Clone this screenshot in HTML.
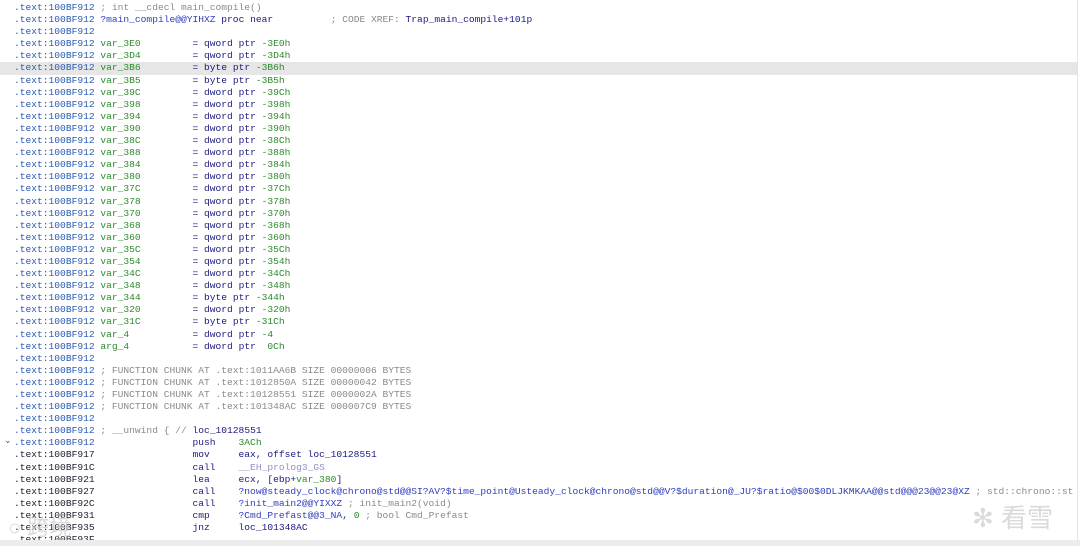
<!DOCTYPE html>
<html><head><meta charset="utf-8"><style>
html,body{margin:0;padding:0;background:#fff;width:1080px;height:546px;overflow:hidden}
#c{position:absolute;left:14px;top:2px;font-family:"Liberation Mono",monospace;font-size:9.6px;line-height:12.1px;white-space:pre;color:#101060}
.r{height:12.1px}
.hl{background:#e6e6e6;margin-left:-14px;padding-left:14px;width:1063px}
.a{color:#2a5ab0}.k{color:#202030}.g{color:#2a8a2a}.c{color:#8a8a8a}.n{color:#1a1a80}.f{color:#3040c0}.p{color:#9090c8}
#rb{position:absolute;left:1077px;top:0;width:1px;height:540px;background:#e4e4e4}
#bb{position:absolute;left:0;top:540px;width:1080px;height:6px;background:#ececec}
#sel{position:absolute;left:4px;top:435px;font:9px "Liberation Sans",sans-serif;color:#555}
.wm{position:absolute;font-family:"Liberation Sans","Noto Sans CJK SC",sans-serif;color:rgba(205,205,205,.75)}
</style></head><body>
<div id="c"><div class="r"><span class="a">.text:100BF912</span> <span class="c">; int __cdecl main_compile()</span></div><div class="r"><span class="a">.text:100BF912</span> <span class="f">?main_compile@@YIHXZ</span> <span class="n">proc near</span>          <span class="c">; CODE XREF: </span><span class="n">Trap_main_compile+101p</span></div><div class="r"><span class="a">.text:100BF912</span></div><div class="r"><span class="a">.text:100BF912</span> <span class="g">var_3E0</span>         <span class="n">= qword ptr</span> <span class="g">-3E0h</span></div><div class="r"><span class="a">.text:100BF912</span> <span class="g">var_3D4</span>         <span class="n">= qword ptr</span> <span class="g">-3D4h</span></div><div class="r hl"><span class="a">.text:100BF912</span> <span class="g">var_3B6</span>         <span class="n">= byte ptr</span> <span class="g">-3B6h</span></div><div class="r"><span class="a">.text:100BF912</span> <span class="g">var_3B5</span>         <span class="n">= byte ptr</span> <span class="g">-3B5h</span></div><div class="r"><span class="a">.text:100BF912</span> <span class="g">var_39C</span>         <span class="n">= dword ptr</span> <span class="g">-39Ch</span></div><div class="r"><span class="a">.text:100BF912</span> <span class="g">var_398</span>         <span class="n">= dword ptr</span> <span class="g">-398h</span></div><div class="r"><span class="a">.text:100BF912</span> <span class="g">var_394</span>         <span class="n">= dword ptr</span> <span class="g">-394h</span></div><div class="r"><span class="a">.text:100BF912</span> <span class="g">var_390</span>         <span class="n">= dword ptr</span> <span class="g">-390h</span></div><div class="r"><span class="a">.text:100BF912</span> <span class="g">var_38C</span>         <span class="n">= dword ptr</span> <span class="g">-38Ch</span></div><div class="r"><span class="a">.text:100BF912</span> <span class="g">var_388</span>         <span class="n">= dword ptr</span> <span class="g">-388h</span></div><div class="r"><span class="a">.text:100BF912</span> <span class="g">var_384</span>         <span class="n">= dword ptr</span> <span class="g">-384h</span></div><div class="r"><span class="a">.text:100BF912</span> <span class="g">var_380</span>         <span class="n">= dword ptr</span> <span class="g">-380h</span></div><div class="r"><span class="a">.text:100BF912</span> <span class="g">var_37C</span>         <span class="n">= dword ptr</span> <span class="g">-37Ch</span></div><div class="r"><span class="a">.text:100BF912</span> <span class="g">var_378</span>         <span class="n">= qword ptr</span> <span class="g">-378h</span></div><div class="r"><span class="a">.text:100BF912</span> <span class="g">var_370</span>         <span class="n">= qword ptr</span> <span class="g">-370h</span></div><div class="r"><span class="a">.text:100BF912</span> <span class="g">var_368</span>         <span class="n">= qword ptr</span> <span class="g">-368h</span></div><div class="r"><span class="a">.text:100BF912</span> <span class="g">var_360</span>         <span class="n">= qword ptr</span> <span class="g">-360h</span></div><div class="r"><span class="a">.text:100BF912</span> <span class="g">var_35C</span>         <span class="n">= dword ptr</span> <span class="g">-35Ch</span></div><div class="r"><span class="a">.text:100BF912</span> <span class="g">var_354</span>         <span class="n">= qword ptr</span> <span class="g">-354h</span></div><div class="r"><span class="a">.text:100BF912</span> <span class="g">var_34C</span>         <span class="n">= dword ptr</span> <span class="g">-34Ch</span></div><div class="r"><span class="a">.text:100BF912</span> <span class="g">var_348</span>         <span class="n">= dword ptr</span> <span class="g">-348h</span></div><div class="r"><span class="a">.text:100BF912</span> <span class="g">var_344</span>         <span class="n">= byte ptr</span> <span class="g">-344h</span></div><div class="r"><span class="a">.text:100BF912</span> <span class="g">var_320</span>         <span class="n">= dword ptr</span> <span class="g">-320h</span></div><div class="r"><span class="a">.text:100BF912</span> <span class="g">var_31C</span>         <span class="n">= byte ptr</span> <span class="g">-31Ch</span></div><div class="r"><span class="a">.text:100BF912</span> <span class="g">var_4</span>           <span class="n">= dword ptr</span> <span class="g">-4</span></div><div class="r"><span class="a">.text:100BF912</span> <span class="g">arg_4</span>           <span class="n">= dword ptr</span>  <span class="g">0Ch</span></div><div class="r"><span class="a">.text:100BF912</span></div><div class="r"><span class="a">.text:100BF912</span> <span class="c">; FUNCTION CHUNK AT .text:1011AA6B SIZE 00000006 BYTES</span></div><div class="r"><span class="a">.text:100BF912</span> <span class="c">; FUNCTION CHUNK AT .text:1012850A SIZE 00000042 BYTES</span></div><div class="r"><span class="a">.text:100BF912</span> <span class="c">; FUNCTION CHUNK AT .text:10128551 SIZE 0000002A BYTES</span></div><div class="r"><span class="a">.text:100BF912</span> <span class="c">; FUNCTION CHUNK AT .text:101348AC SIZE 000007C9 BYTES</span></div><div class="r"><span class="a">.text:100BF912</span></div><div class="r"><span class="a">.text:100BF912</span> <span class="c">; __unwind { // </span><span class="n">loc_10128551</span></div><div class="r"><span class="a">.text:100BF912</span>                 <span class="n">push    </span><span class="g">3ACh</span></div><div class="r"><span class="k">.text:100BF917</span>                 <span class="n">mov     eax, offset loc_10128551</span></div><div class="r"><span class="k">.text:100BF91C</span>                 <span class="n">call    </span><span class="p">__EH_prolog3_GS</span></div><div class="r"><span class="k">.text:100BF921</span>                 <span class="n">lea     ecx, [ebp+</span><span class="g">var_380</span><span class="n">]</span></div><div class="r"><span class="k">.text:100BF927</span>                 <span class="n">call    </span><span class="f">?now@steady_clock@chrono@std@@SI?AV?$time_point@Usteady_clock@chrono@std@@V?$duration@_JU?$ratio@$00$0DLJKMKAA@@std@@@23@@23@XZ</span> <span class="c">; std::chrono::st</span></div><div class="r"><span class="k">.text:100BF92C</span>                 <span class="n">call    </span><span class="f">?init_main2@@YIXXZ</span> <span class="c">; init_main2(void)</span></div><div class="r"><span class="k">.text:100BF931</span>                 <span class="n">cmp     </span><span class="f">?Cmd_Prefast@@3_NA</span><span class="n">, </span><span class="g">0</span> <span class="c">; bool Cmd_Prefast</span></div><div class="r"><span class="k">.text:100BF935</span>                 <span class="n">jnz     loc_101348AC</span></div><div class="r"><span class="k">.text:100BF93F</span></div></div>
<div id="sel">&#8964;</div>
<div id="rb"></div><div id="bb"></div>
<div class="wm" style="left:8px;top:510px;font-size:22px">○ 跨境</div>
<div class="wm" style="left:972px;top:498px;font-size:26px">✻ 看雪</div>
</body></html>
